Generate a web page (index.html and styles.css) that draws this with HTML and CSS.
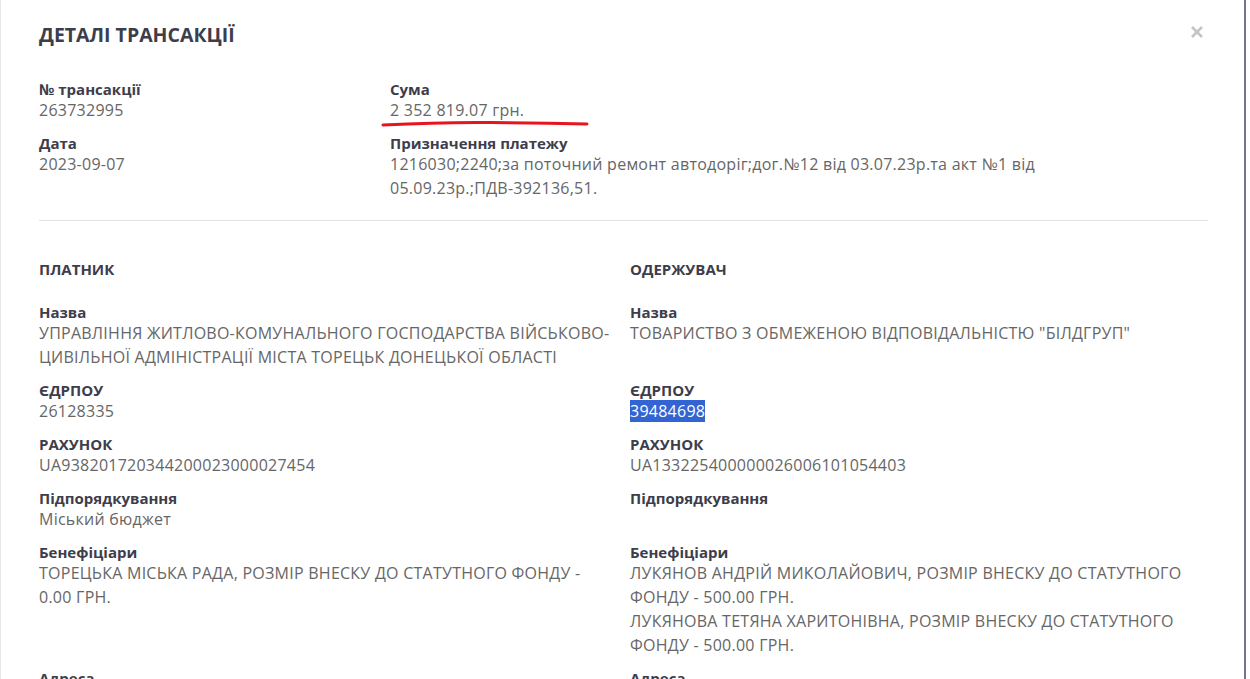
FILE: index.html
```html
<!DOCTYPE html>
<html lang="uk">
<head>
<meta charset="utf-8">
<title>Деталі трансакції</title>
<link rel="stylesheet" href="styles.css">
</head>
<body>
<div class="modal">
  <button class="close" aria-label="Закрити">
    <svg width="14" height="14" viewBox="0 0 14 14"><path d="M2 2 L12 12 M12 2 L2 12" stroke="#c4c4c4" stroke-width="2.6" stroke-linecap="butt"/></svg>
  </button>
  <h1 class="title">ДЕТАЛІ ТРАНСАКЦІЇ</h1>

  <div class="top">
    <div class="col">
      <div class="field">
        <div class="label">№ трансакції</div>
        <div class="value">263732995</div>
      </div>
      <div class="field">
        <div class="label">Дата</div>
        <div class="value">2023-09-07</div>
      </div>
    </div>
    <div class="col">
      <div class="field">
        <div class="label">Сума</div>
        <div class="value"><span class="sum">2 352 819.07 грн.<svg class="mark" width="208" height="8" viewBox="0 0 208 8"><path d="M2 5 Q60 2 110 2.5 T206 4" stroke="#e8141c" stroke-width="3" fill="none" stroke-linecap="round"/></svg></span></div>
      </div>
      <div class="field">
        <div class="label">Призначення платежу</div>
        <div class="value purpose">1216030;2240;за поточний ремонт автодоріг;дог.№12 від 03.07.23р.та акт №1 від 05.09.23р.;ПДВ-392136,51.</div>
      </div>
    </div>
  </div>

  <hr class="divider">

  <div class="parties">
    <div class="section">ПЛАТНИК</div>
    <div class="section">ОДЕРЖУВАЧ</div>

    <div class="field">
      <div class="label">Назва</div>
      <div class="value">УПРАВЛІННЯ ЖИТЛОВО-КОМУНАЛЬНОГО ГОСПОДАРСТВА ВІЙСЬКОВО-ЦИВІЛЬНОЇ АДМІНІСТРАЦІЇ МІСТА ТОРЕЦЬК ДОНЕЦЬКОЇ ОБЛАСТІ</div>
    </div>
    <div class="field">
      <div class="label">Назва</div>
      <div class="value">ТОВАРИСТВО З ОБМЕЖЕНОЮ ВІДПОВІДАЛЬНІСТЮ "БІЛДГРУП"</div>
    </div>

    <div class="field">
      <div class="label">ЄДРПОУ</div>
      <div class="value">26128335</div>
    </div>
    <div class="field">
      <div class="label">ЄДРПОУ</div>
      <div class="value"><span class="sel">39484698</span></div>
    </div>

    <div class="field">
      <div class="label">РАХУНОК</div>
      <div class="value">UA938201720344200023000027454</div>
    </div>
    <div class="field">
      <div class="label">РАХУНОК</div>
      <div class="value">UA133225400000026006101054403</div>
    </div>

    <div class="field">
      <div class="label">Підпорядкування</div>
      <div class="value">Міський бюджет</div>
    </div>
    <div class="field">
      <div class="label">Підпорядкування</div>
      <div class="value"></div>
    </div>

    <div class="field">
      <div class="label">Бенефіціари</div>
      <div class="value">ТОРЕЦЬКА МІСЬКА РАДА, РОЗМІР ВНЕСКУ ДО СТАТУТНОГО ФОНДУ - 0.00 ГРН.</div>
    </div>
    <div class="field">
      <div class="label">Бенефіціари</div>
      <div class="value">ЛУКЯНОВ АНДРІЙ МИКОЛАЙОВИЧ, РОЗМІР ВНЕСКУ ДО СТАТУТНОГО ФОНДУ - 500.00 ГРН.<br>ЛУКЯНОВА ТЕТЯНА ХАРИТОНІВНА, РОЗМІР ВНЕСКУ ДО СТАТУТНОГО ФОНДУ - 500.00 ГРН.</div>
    </div>

    <div class="field">
      <div class="label">Адреса</div>
      <div class="value">&nbsp;</div>
    </div>
    <div class="field">
      <div class="label">Адреса</div>
      <div class="value">&nbsp;</div>
    </div>
  </div>
</div>
</body>
</html>
```

FILE: styles.css
```css
html, body {
  margin: 0;
  padding: 0;
  background: #ffffff;
  overflow: hidden;
}

body {
  font-family: "Open Sans", "Noto Sans", sans-serif;
  color: #666;
  height: 679px;
}

.modal {
  position: relative;
  width: 1246px;
  height: 679px;
  box-sizing: border-box;
  border-left: 1px solid #e6e6ea;
  border-right: 2px solid #74748a;
  padding: 23px 0 0 38px;
  overflow: hidden;
}

.close {
  position: absolute;
  top: 25px;
  right: 40px;
  border: 0;
  background: none;
  padding: 0;
  width: 14px;
  height: 14px;
  cursor: pointer;
}

.close svg { display: block; }

.title {
  margin: 0 0 33px;
  font-size: 19.5px;
  line-height: 24px;
  font-weight: 700;
  color: #3d3d4c;
  letter-spacing: 0;
}

.top {
  display: grid;
  grid-template-columns: 351px 1fr;
  width: 1000px;
}

.field {
  margin-bottom: 12px;
}

.label {
  font-size: 15px;
  line-height: 18px;
  font-weight: 700;
  color: #3d3d4c;
}

.value {
  font-size: 16px;
  line-height: 24px;
  color: #666;
  min-height: 24px;
  letter-spacing: 0.25px;
}

.purpose { width: 670px; }

.sum {
  position: relative;
}

.mark {
  position: absolute;
  left: -9px;
  top: 21px;
}

.divider {
  margin: 8px 0 0;
  width: 1169px;
  border: 0;
  border-top: 1px solid #e2e2e6;
}

.parties {
  display: grid;
  grid-template-columns: 591px 578px;
  padding-top: 38px;
}

.section {
  font-size: 15px;
  line-height: 20px;
  font-weight: 700;
  color: #3d3d4c;
  margin-bottom: 24px;
}

.parties .value { width: 575px; }

.sel {
  background: #3264d4;
  color: #fff;
}
```
